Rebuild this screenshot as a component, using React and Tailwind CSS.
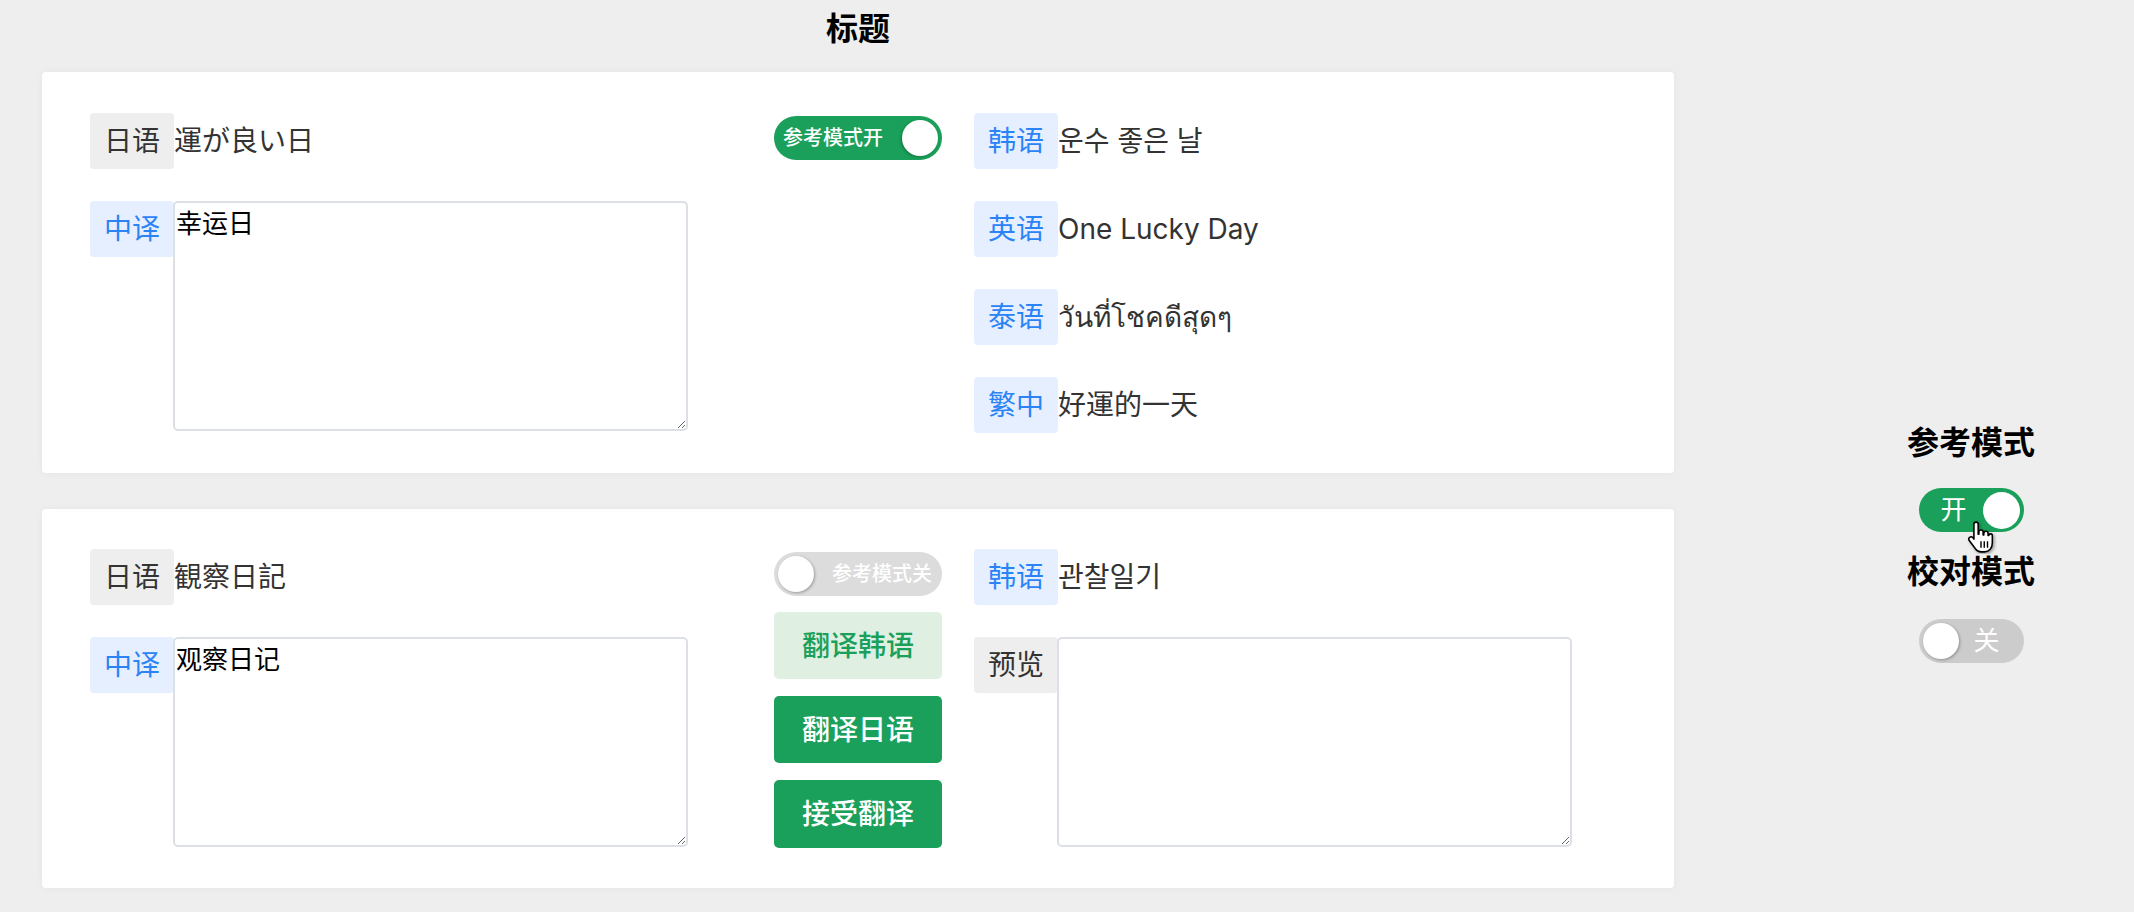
import React from "react";

const FONT = {
  fontFamily: 'Inter, "Noto Sans CJK SC", "Noto Sans", "DejaVu Sans", sans-serif',
};

function Label({ children, tone = "blue" }) {
  const cls =
    tone === "blue"
      ? "bg-[#e6efff] text-[#2b83f6]"
      : "bg-[#eeeeee] text-[#333333]";
  return (
    <div
      className={`w-[84px] h-[56px] shrink-0 flex items-center justify-center rounded-[4px] text-[28px] ${cls}`}
    >
      {children}
    </div>
  );
}

function TextRow({ label, tone, text }) {
  return (
    <div className="flex items-center h-[56px]">
      <Label tone={tone}>{label}</Label>
      <span className="text-[28px] text-[#333333] whitespace-nowrap">{text}</span>
    </div>
  );
}

function AreaRow({ label, tone, value, height }) {
  return (
    <div className="flex items-start">
      <Label tone={tone}>{label}</Label>
      <textarea
        defaultValue={value}
        className={`-ml-[1px] w-[515px] ${height} border-2 border-[#dcdfe6] rounded-[5px] p-[1px] bg-white text-[26px] text-black outline-none`}
      />
    </div>
  );
}

function CardToggle({ on }) {
  if (on) {
    return (
      <div className="mt-[3px] w-[168px] h-[44px] rounded-full bg-[#1aa05a] flex items-center justify-between pl-[9px] pr-[4px]">
        <span className="text-[20px] font-medium text-white leading-none">参考模式开</span>
        <span className="w-[36px] h-[36px] rounded-full bg-white shadow-[-1px_1px_3px_rgba(0,0,0,0.25)]" />
      </div>
    );
  }
  return (
    <div className="mt-[3px] w-[168px] h-[44px] rounded-full bg-[#dcdcdc] flex items-center justify-between pl-[4px] pr-[10px]">
      <span className="w-[36px] h-[36px] rounded-full bg-white shadow-[1px_1px_3px_rgba(0,0,0,0.3)]" />
      <span className="text-[20px] font-medium text-white leading-none">参考模式关</span>
    </div>
  );
}

function HandCursor() {
  return (
    <svg
      className="absolute left-[46px] top-[32px] pointer-events-none"
      width="32"
      height="34"
      viewBox="0 0 21 24"
    >
      <g filter="drop-shadow(1px 1px 1px rgba(0,0,0,0.35))">
        <path
          d="M7,1.5 C7.8,1.5 8.5,2.2 8.5,3 L8.5,10 L9,10 L9,8.5 C9,7.7 9.7,7 10.5,7 C11.3,7 12,7.7 12,8.5 L12,10.5 L12.5,10.5 L12.5,9.5 C12.5,8.7 13.2,8 14,8 C14.8,8 15.5,8.7 15.5,9.5 L15.5,11 L16,11 C16,10.2 16.7,9.8 17.3,9.8 C18,9.8 18.5,10.4 18.5,11.2 L18.5,16 C18.5,19.5 16.5,22.5 13,22.5 L10.5,22.5 C8.5,22.5 7.3,21.5 6.3,20 L2.2,14.5 C1.6,13.7 1.8,12.7 2.5,12.2 C3.2,11.7 4.2,11.9 4.8,12.6 L5.5,13.5 L5.5,3 C5.5,2.2 6.2,1.5 7,1.5 Z"
          fill="white"
          stroke="black"
          strokeWidth="1.1"
          strokeLinejoin="round"
        />
      </g>
      <path d="M10.5 15 V19.5 M12.8 15 V19.5 M15.1 15 V19.5" stroke="black" strokeWidth="1" />
    </svg>
  );
}

export default function App() {
  return (
    <div className="min-h-screen w-full bg-[#eeeeee] flex" style={FONT}>
      <div className="w-[1716px] shrink-0 px-[42px] pb-[24px]">
        <h1 className="text-center text-[32px] font-bold leading-[58px] mb-[14px] text-black">
          标题
        </h1>

        <div className="bg-white rounded-[4px] shadow-[0_0_10px_rgba(0,0,0,0.04)] pt-[41px] pb-[40px] pl-[48px] flex items-start">
          <div className="w-[598px] shrink-0 flex flex-col gap-[32px]">
            <TextRow label="日语" tone="gray" text="運が良い日" />
            <AreaRow label="中译" tone="blue" value="幸运日" height="h-[230px]" />
          </div>
          <div className="ml-[86px] w-[168px] shrink-0">
            <CardToggle on />
          </div>
          <div className="ml-[32px] flex flex-col gap-[32px]">
            <TextRow label="韩语" tone="blue" text="운수 좋은 날" />
            <TextRow label="英语" tone="blue" text="One Lucky Day" />
            <TextRow label="泰语" tone="blue" text="วันที่โชคดีสุดๆ" />
            <TextRow label="繁中" tone="blue" text="好運的一天" />
          </div>
        </div>

        <div className="mt-[36px] bg-white rounded-[4px] shadow-[0_0_10px_rgba(0,0,0,0.04)] pt-[40px] pb-[40px] pl-[48px] flex items-start">
          <div className="w-[598px] shrink-0 flex flex-col gap-[32px]">
            <TextRow label="日语" tone="gray" text="観察日記" />
            <AreaRow label="中译" tone="blue" value="观察日记" height="h-[210px]" />
          </div>
          <div className="ml-[86px] w-[168px] shrink-0 flex flex-col">
            <CardToggle on={false} />
            <button className="mt-[16px] h-[67px] w-full rounded-[5px] bg-[#dff0e3] text-[#1aa05a] text-[28px] font-medium">
              翻译韩语
            </button>
            <button className="mt-[17px] h-[67px] w-full rounded-[5px] bg-[#1aa05a] text-white text-[28px] font-medium">
              翻译日语
            </button>
            <button className="mt-[17px] h-[68px] w-full rounded-[5px] bg-[#1aa05a] text-white text-[28px] font-medium">
              接受翻译
            </button>
          </div>
          <div className="ml-[32px] flex flex-col gap-[32px]">
            <TextRow label="韩语" tone="blue" text="관찰일기" />
            <AreaRow label="预览" tone="gray" value="" height="h-[210px]" />
          </div>
        </div>
      </div>

      <div className="flex-1 flex flex-col items-center pt-[419px] pl-[92px]">
        <div className="text-[32px] font-bold leading-[48px] text-black">参考模式</div>
        <div className="relative mt-[21px] w-[105px] h-[44px] rounded-full bg-[#1aa05a] flex items-center justify-between pl-[22px] pr-[4px]">
          <span className="text-[26px] text-white leading-none">开</span>
          <span className="w-[37px] h-[37px] rounded-full bg-white" />
          <HandCursor />
        </div>
        <div className="mt-[16px] text-[32px] font-bold leading-[48px] text-black">校对模式</div>
        <div className="mt-[23px] w-[105px] h-[44px] rounded-full bg-[#cccccc] flex items-center pl-[4px]">
          <span className="w-[36px] h-[36px] rounded-full bg-white shadow-[1px_1px_3px_rgba(0,0,0,0.3)]" />
          <span className="ml-[15px] text-[26px] text-white leading-none">关</span>
        </div>
      </div>
    </div>
  );
}
